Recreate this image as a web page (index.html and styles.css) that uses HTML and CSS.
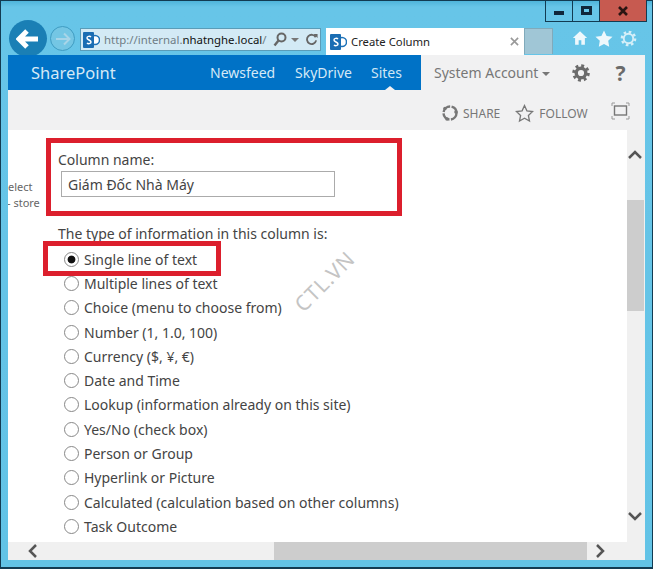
FILE: index.html
```html
<!DOCTYPE html>
<html lang="en">
<head>
    <meta charset="UTF-8">
    <meta name="viewport" content="width=device-width, initial-scale=1.0">
    <title>Create Column</title>
    <link rel="stylesheet" href="styles.css">
</head>
<body>
    <div class="window">
        <div class="window-controls">
            <div class="win-btn"><span class="win-min"></span></div>
            <div class="win-btn"><span class="win-max"></span></div>
            <div class="win-btn win-close">
                <svg width="12" height="10" viewBox="0 0 12 10"><path d="M2 1l8 8M10 1l-8 8" stroke="#2b1512" stroke-width="2.6" fill="none"/></svg>
            </div>
        </div>

        <!-- browser toolbar -->
        <div class="toolbar">
            <div class="nav-back">
                <svg width="24" height="22" viewBox="0 0 24 22"><path d="M11 3l-8 8 8 8M4 11h18" stroke="#fff" stroke-width="5" fill="none"/></svg>
            </div>
            <div class="nav-forward">
                <svg width="16" height="14" viewBox="0 0 16 14"><path d="M9 1.500l5.500 5.500-5.500 5.500M14 7H1" stroke="#a8d5e8" stroke-width="2" fill="none"/></svg>
            </div>
            <div class="address">
                <svg class="sp-icon" width="17" height="18" viewBox="0 0 17 18"><circle cx="12" cy="9" r="4.500" fill="#fff" stroke="#1d72b8" stroke-width="1.500"/><rect x="0" y="1" width="11" height="16" rx="1" fill="#1a6db3"/><path d="M8 6c-1-1-4-1-4 1s4 2 4 4-3 2-4 1" stroke="#fff" stroke-width="1.500" fill="none"/></svg>
                <span class="url">http://internal.<b>nhatnghe.local</b>/</span>
                <svg class="addr-search" width="14" height="15" viewBox="0 0 14 15"><circle cx="8.500" cy="5.500" r="4" stroke="#666" stroke-width="2" fill="none"/><path d="M5.500 8.500l-4 5" stroke="#666" stroke-width="2.400"/></svg>
                <span class="caret addr-caret"></span>
                <svg class="addr-refresh" width="12" height="13" viewBox="0 0 13 13"><path d="M10.500 4a5 5 0 1 0 .5 3.500" stroke="#666" stroke-width="2" fill="none"/><path d="M8 .5h4.500v4.500z" fill="#666"/></svg>
            </div>
            <div class="tab">
                <svg width="17" height="18" viewBox="0 0 17 18"><circle cx="12" cy="9" r="4.500" fill="#fff" stroke="#1d72b8" stroke-width="1.500"/><rect x="0" y="1" width="11" height="16" rx="1" fill="#1a6db3"/><path d="M8 6c-1-1-4-1-4 1s4 2 4 4-3 2-4 1" stroke="#fff" stroke-width="1.500" fill="none"/></svg>
                <span class="tab-title">Create Column</span>
                <svg class="tab-close" width="9" height="9" viewBox="0 0 10 10"><path d="M1 1l8 8M9 1l-8 8" stroke="#999" stroke-width="1.800"/></svg>
            </div>
            <div class="new-tab"></div>
            <div class="tool-icons">
                <svg width="16" height="16" viewBox="0 0 18 17"><path d="M9 1L1 8.500h2.500V16h4v-5h3v5h4V8.500H17z" fill="#eef8fc"/></svg>
                <svg width="18" height="17" viewBox="0 0 18 17"><path d="M9 .5l2.600 5.400 5.900.8-4.300 4.100 1 5.900L9 13.900l-5.200 2.800 1-5.900L.5 6.700l5.900-.8z" fill="#eef8fc"/></svg>
                <svg width="17" height="17" viewBox="0 0 18 18"><circle cx="9" cy="9" r="5" fill="none" stroke="#d6eff8" stroke-width="2"/><circle cx="9" cy="9" r="7" fill="none" stroke="#d6eff8" stroke-width="2.600" stroke-dasharray="2.750 2.750"/></svg>
            </div>
        </div>

        <!-- sharepoint suite bar -->
        <div class="suite-bar">
            <div class="suite-nav">
                <span class="brand">SharePoint</span>
                <a class="nav-link nav-newsfeed">Newsfeed</a>
                <a class="nav-link nav-skydrive">SkyDrive</a>
                <a class="nav-link nav-sites">Sites</a>
            </div>
            <div class="suite-user">
                <span class="account">System Account</span>
                <span class="caret account-caret"></span>
                <svg class="suite-gear" width="18" height="18" viewBox="0 0 18 18"><circle cx="9" cy="9" r="4.800" fill="none" stroke="#6b6b6b" stroke-width="3.400"/><circle cx="9" cy="9" r="7.300" fill="none" stroke="#6b6b6b" stroke-width="3" stroke-dasharray="2.860 2.870"/></svg>
                <span class="help">?</span>
            </div>
        </div>

        <!-- share / follow row -->
        <div class="ribbon">
            <svg width="18" height="18" viewBox="0 0 18 18"><circle cx="9" cy="9" r="6.500" fill="none" stroke="#777" stroke-width="2.400" stroke-dasharray="9 1.500"/><circle cx="4" cy="4.500" r="1.800" fill="#777"/><circle cx="15" cy="8" r="1.800" fill="#777"/><circle cx="6" cy="15" r="1.800" fill="#777"/></svg>
            <span class="ribbon-label">SHARE</span>
            <svg class="follow-icon" width="19" height="19" viewBox="0 0 19 19"><path d="M9.500 1.500l2.400 5.300 5.700.7-4.200 3.900 1.100 5.700-5-2.800-5 2.800 1.100-5.700L1.400 7.500l5.700-.7z" fill="none" stroke="#777" stroke-width="1.300"/></svg>
            <span class="ribbon-label follow-label">FOLLOW</span>
            <svg class="focus-icon" width="19" height="18" viewBox="0 0 19 18"><rect x="3.500" y="4" width="12" height="9" fill="none" stroke="#777" stroke-width="1.400"/><path d="M1 4V1h3M15 1h3v3M18 14v3h-3M4 17H1v-3" fill="none" stroke="#999"/></svg>
        </div>

        <div class="page">
            <div class="content">
                <div class="clipped-side">
                    <span>elect</span>
                    <span>- store</span>
                </div>
                <div class="form">
                    <label class="field-label">Column name:</label>
                    <input class="text-input" type="text" value="Giám Đốc Nhà Máy">
                    <p class="group-label">The type of information in this column is:</p>
                    <ul class="type-list">
                        <li><input type="radio" name="type" checked>Single line of text</li>
                        <li><input type="radio" name="type">Multiple lines of text</li>
                        <li><input type="radio" name="type">Choice (menu to choose from)</li>
                        <li><input type="radio" name="type">Number (1, 1.0, 100)</li>
                        <li><input type="radio" name="type">Currency ($, ¥, €)</li>
                        <li><input type="radio" name="type">Date and Time</li>
                        <li><input type="radio" name="type">Lookup (information already on this site)</li>
                        <li><input type="radio" name="type">Yes/No (check box)</li>
                        <li><input type="radio" name="type">Person or Group</li>
                        <li><input type="radio" name="type">Hyperlink or Picture</li>
                        <li><input type="radio" name="type">Calculated (calculation based on other columns)</li>
                        <li><input type="radio" name="type">Task Outcome</li>
                    </ul>
                </div>
                <div class="mark mark-name"></div>
                <div class="mark mark-type"></div>
                <div class="watermark">CTL.VN</div>
            </div>
            <div class="vscroll">
                <svg class="vscroll-up" width="14" height="9" viewBox="0 0 14 9"><path d="M1 8l6-6 6 6" stroke="#555" stroke-width="2.500" fill="none"/></svg>
                <div class="vscroll-thumb"></div>
                <svg class="vscroll-down" width="14" height="9" viewBox="0 0 14 9"><path d="M1 1l6 6 6-6" stroke="#555" stroke-width="2.500" fill="none"/></svg>
            </div>
        </div>

        <div class="hscroll">
            <svg class="hscroll-left" width="9" height="14" viewBox="0 0 9 14"><path d="M8 1L2 7l6 6" stroke="#555" stroke-width="2.500" fill="none"/></svg>
            <div class="hscroll-thumb"></div>
            <svg class="hscroll-right" width="9" height="14" viewBox="0 0 9 14"><path d="M1 1l6 6-6 6" stroke="#555" stroke-width="2.500" fill="none"/></svg>
        </div>
    </div>
</body>
</html>
```

FILE: styles.css
```css
* {
    margin: 0;
    padding: 0;
    box-sizing: border-box;
}

body {
    width: 653px;
    height: 569px;
    overflow: hidden;
    font-family: "Noto Sans", "Open Sans", sans-serif;
    background: #62c3e6;
}

.window {
    position: relative;
    width: 653px;
    height: 569px;
    padding: 0 7px;
    background: linear-gradient(#4fb4da 0, #67c5e8 6px, #62c3e6 100%);
    border: 1px solid #123b52;
    border-width: 1px 1px 2px 1px;
}

/* window buttons */
.window-controls {
    position: absolute;
    top: -1px;
    right: 5px;
    display: flex;
    height: 22px;
    border: 1px solid #123b52;
    border-top: none;
}

.win-btn {
    width: 27px;
    display: flex;
    align-items: center;
    justify-content: center;
    border-right: 1px solid #123b52;
}

.win-close {
    width: 46px;
    background: #c75a50;
    border-right: none;
}

.win-min {
    width: 10px;
    height: 4px;
    margin-top: 4px;
    background: #10263a;
}

.win-max {
    width: 11px;
    height: 9px;
    border: 3px solid #10263a;
}

/* toolbar */
.toolbar {
    position: relative;
    display: flex;
    align-items: flex-start;
    height: 54px;
    padding-top: 27px;
}

.nav-back {
    position: absolute;
    left: 1px;
    top: 19px;
    width: 38px;
    height: 37px;
    border-radius: 50%;
    background: #1a7fb5;
    display: flex;
    align-items: center;
    justify-content: center;
}

.nav-forward {
    position: absolute;
    left: 42px;
    top: 25px;
    width: 25px;
    height: 25px;
    border-radius: 50%;
    background: #74c6e4;
    border: 1px solid #3f9cc2;
    display: flex;
    align-items: center;
    justify-content: center;
}

.address {
    display: flex;
    align-items: center;
    width: 241px;
    height: 23px;
    margin-left: 72px;
    padding-left: 2px;
    background: #d3eaf5;
    border: 1px solid #5a9cb8;
}

.sp-icon {
    flex: none;
}

.url {
    flex: none;
    margin-left: 4px;
    width: 166px;
    font-size: 11.400px;
    color: #6f7d85;
    white-space: nowrap;
}

.url b {
    font-weight: normal;
    color: #111;
}

.addr-search {
    flex: none;
    margin-left: 3px;
}

.caret {
    display: inline-block;
    width: 0;
    height: 0;
    border-left: 4px solid transparent;
    border-right: 4px solid transparent;
    border-top: 4px solid #777;
}

.addr-caret {
    margin-left: 4px;
}

.addr-refresh {
    flex: none;
    margin-left: 7px;
}

.tab {
    display: flex;
    align-items: center;
    width: 198px;
    height: 27px;
    margin-left: 5px;
    padding: 0 5px 0 4px;
    background: #fff;
}

.tab-title {
    margin-left: 4px;
    font-size: 11.300px;
    color: #222;
    white-space: nowrap;
}

.tab-close {
    margin-left: auto;
}

.new-tab {
    width: 29px;
    height: 26px;
    background: #a0c6d6;
    border: 1px solid #80aabb;
    border-bottom: none;
}

.tool-icons {
    display: flex;
    gap: 7px;
    margin-left: 19px;
    margin-top: 2px;
}

/* suite bar */
.suite-bar {
    display: flex;
    height: 35px;
}

.suite-nav {
    position: relative;
    display: flex;
    align-items: center;
    width: 413px;
    padding-left: 23px;
    background: #0072c6;
    color: #d5e9f6;
}

.brand {
    font-size: 16.500px;
    width: 179px;
}

.nav-link {
    font-size: 14px;
    white-space: nowrap;
}

.nav-newsfeed {
    width: 85px;
}

.nav-skydrive {
    width: 76px;
}

.nav-sites {
    color: #cfe6f5;
}

.nav-sites::after {
    content: "";
    position: absolute;
    left: 377px;
    bottom: 0;
    border-left: 5px solid transparent;
    border-right: 5px solid transparent;
    border-bottom: 4px solid #f1f1f2;
}

.suite-user {
    flex: 1;
    display: flex;
    align-items: center;
    padding-left: 13px;
    background: #f1f1f2;
    color: #777;
}

.account {
    font-size: 14px;
    white-space: nowrap;
}

.account-caret {
    margin-left: 4px;
    margin-top: 2px;
}

.suite-gear {
    margin-left: 22px;
}

.help {
    margin-left: 25px;
    font-size: 21px;
    font-weight: bold;
    color: #6b6b6b;
}

/* share row */
.ribbon {
    display: flex;
    align-items: center;
    height: 40px;
    padding: 6px 0 0 433px;
    background: #f1f1f2;
}

.ribbon-label {
    margin-left: 4px;
    font-size: 12px;
    color: #777;
}

.follow-icon {
    margin-left: 15px;
}

.follow-label {
    margin-left: 5px;
}

.focus-icon {
    margin-left: 23px;
    margin-top: -5px;
}

/* main area */
.page {
    display: flex;
    height: 412px;
}

.content {
    position: relative;
    flex: 1;
    display: flex;
    background: #fff;
    overflow: hidden;
}

.clipped-side {
    width: 50px;
    flex: none;
    padding-top: 49px;
    font-size: 11px;
    line-height: 16px;
    color: #666;
    white-space: nowrap;
    overflow: hidden;
}

.clipped-side span {
    display: block;
}

.clipped-side span:last-child {
    margin-left: -1px;
}

.form {
    flex: 1;
    padding-top: 20px;
    color: #444;
    font-size: 14px;
}

.field-label {
    display: block;
    line-height: 20px;
}

.text-input {
    display: block;
    width: 274px;
    height: 26px;
    margin: 1px 0 0 3px;
    padding: 0 6px;
    border: 1px solid #ababab;
    font-family: inherit;
    font-size: 14px;
    color: #444;
}

.group-label {
    margin-top: 27px;
    line-height: 20px;
}

.type-list {
    list-style: none;
    margin-top: 3px;
}

.type-list li {
    display: flex;
    align-items: center;
    height: 24.300px;
    white-space: nowrap;
}

.type-list input {
    appearance: none;
    width: 15px;
    height: 15px;
    margin: 0 5px 0 6px;
    border: 1px solid #888;
    border-radius: 50%;
    background: #fff;
}

.type-list input:checked {
    background: radial-gradient(circle, #111 0, #111 3.500px, #fff 4.300px);
}

/* red annotation boxes */
.mark {
    position: absolute;
    border: 5px solid #dc1f2d;
}

.mark-name {
    left: 38px;
    top: 8px;
    width: 356px;
    height: 78px;
}

.mark-type {
    left: 35px;
    top: 111px;
    width: 178px;
    height: 35px;
}

.watermark {
    position: absolute;
    left: 279px;
    top: 137px;
    font-size: 21px;
    letter-spacing: 1px;
    color: #c4c4c4;
    transform: rotate(-45deg);
}

/* scrollbars */
.vscroll {
    position: relative;
    width: 18px;
    background: #f0f0f0;
}

.vscroll-thumb {
    position: absolute;
    top: 70px;
    left: 0;
    width: 17px;
    height: 111px;
    background: #cdcdcd;
}

.vscroll-up,
.vscroll-down {
    position: absolute;
    left: 1px;
}

.vscroll-up {
    top: 20px;
}

.vscroll-down {
    top: 382px;
}

.hscroll {
    position: relative;
    height: 18px;
    background: #f0f0f0;
}

.hscroll-thumb {
    position: absolute;
    left: 266px;
    top: 0;
    width: 313px;
    height: 18px;
    background: #cdcdcd;
}

.hscroll-left,
.hscroll-right {
    position: absolute;
    top: 2px;
}

.hscroll-left {
    left: 20px;
}

.hscroll-right {
    left: 588px;
}
```
